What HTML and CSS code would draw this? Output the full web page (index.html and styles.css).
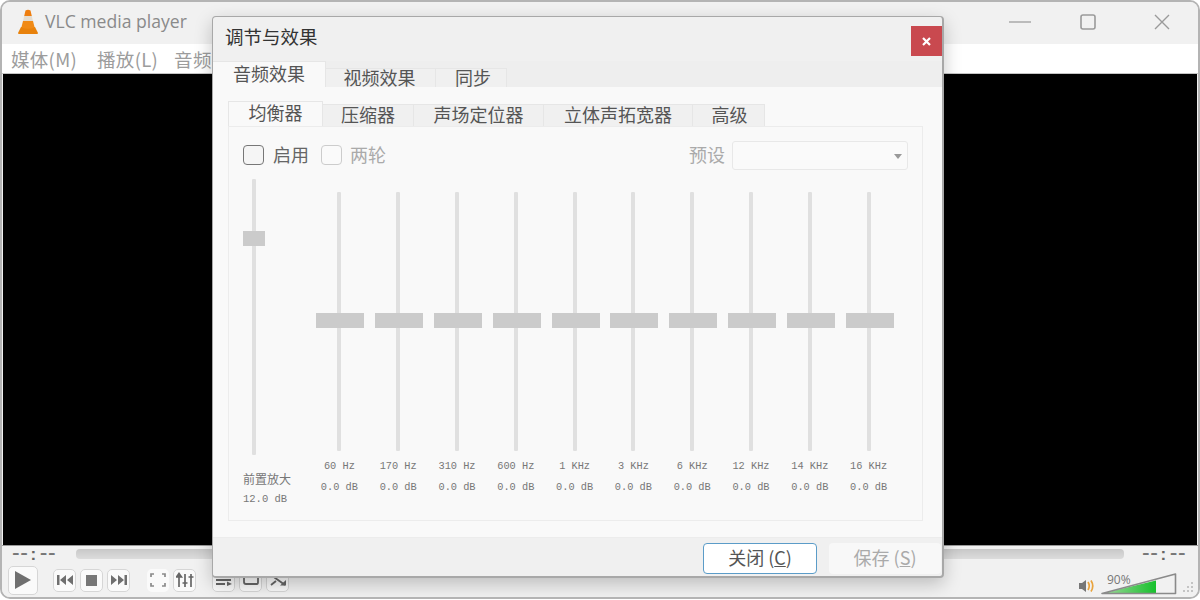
FILE: index.html
```html
<!DOCTYPE html>
<html lang="zh-CN">
<head>
  <meta charset="UTF-8">
  <link rel="stylesheet" href="styles.css">
  <title>VLC media player</title>
</head>
<body>

<div class="player">
  <div class="titlebar">
    <svg class="cone" width="24" height="26" viewBox="0 0 24 26">
      <path d="M2 24 L5 18 H19 L22 24 Q22 25 21 25 H3 Q2 25 2 24Z" fill="#e8820c"/>
      <path d="M9.5 1.5 Q12 0 14.5 1.5 L15.8 7 H8.2Z" fill="#ee7d0e"/>
      <path d="M8.2 7 H15.8 L17 12 H7Z" fill="#e4dccf"/>
      <path d="M7 12 H17 L18.6 18.5 Q12 21 5.4 18.5Z" fill="#f08a16"/>
    </svg>
    <span class="app-name">VLC media player</span>
    <div class="win-buttons">
      <svg width="24" height="16" viewBox="0 0 24 16"><path d="M1 8 H23" stroke="#a8a8a8" stroke-width="1.5"/></svg>
      <svg width="16" height="16" viewBox="0 0 16 16"><rect x="1" y="1" width="14" height="14" rx="2" fill="none" stroke="#9a9a9a" stroke-width="1.6"/></svg>
      <svg width="16" height="16" viewBox="0 0 16 16"><path d="M1 1 L15 15 M15 1 L1 15" stroke="#9a9a9a" stroke-width="1.4"/></svg>
    </div>
  </div>

  <div class="menubar">
    <span>媒体(M)</span>
    <span>播放(L)</span>
    <span>音频(A)</span>
  </div>

  <div class="video"></div>

  <div class="controls">
    <div class="seek-row">
      <span class="time">--<span class="colon">:</span>--</span>
      <div class="seek"></div>
      <span class="time">--<span class="colon">:</span>--</span>
    </div>
    <div class="button-row">
      <button class="ctl ctl-play"><svg width="16" height="18" viewBox="0 0 16 18"><path d="M0 0 L16 9 L0 18Z" fill="#6f6f6f"/></svg></button>
      <button class="ctl"><svg width="16" height="10" viewBox="0 0 16 10"><path d="M0 0 H2.5 V10 H0Z M9 0 V10 L3 5Z M16 0 V10 L10 5Z" fill="#6f6f6f"/></svg></button>
      <button class="ctl"><svg width="11" height="11" viewBox="0 0 11 11"><rect width="11" height="11" fill="#777"/></svg></button>
      <button class="ctl"><svg width="16" height="10" viewBox="0 0 16 10"><path d="M0 0 L6 5 L0 10Z M7 0 L13 5 L7 10Z M13.5 0 H16 V10 H13.5Z" fill="#6f6f6f"/></svg></button>
      <button class="ctl flat"><svg width="16" height="14" viewBox="0 0 16 14"><path d="M1 4 V1 H4 M12 1 H15 V4 M15 10 V13 H12 M4 13 H1 V10" fill="none" stroke="#8a8a8a" stroke-width="1.7"/></svg></button>
      <button class="ctl"><svg width="18" height="16" viewBox="0 0 18 16"><path d="M3 2 V15 M9 2 V15 M15 2 V15" stroke="#666" stroke-width="1.7"/><path d="M0.5 5 L3 1.5 L5.5 5Z M6.5 11 H11.5 M12.5 5 H17.5" stroke="#666" stroke-width="1.6" fill="#666"/></svg></button>
      <button class="ctl group"><svg width="16" height="12" viewBox="0 0 16 12"><path d="M0 1.5 H15 M0 6 H15 M0 10 H9" stroke="#666" stroke-width="1.8"/><path d="M11 7.5 L16 10 L11 12Z" fill="#666"/></svg></button>
      <button class="ctl"><svg width="16" height="12" viewBox="0 0 16 12"><path d="M1 2 V8 Q1 10 3 10 H14 Q15 10 15 8 V2" fill="none" stroke="#666" stroke-width="1.8"/></svg></button>
      <button class="ctl"><svg width="16" height="12" viewBox="0 0 16 12"><path d="M1 1 L15 11 M1 11 L6 7" stroke="#666" stroke-width="1.9"/><path d="M10 11.5 H16 V6Z" fill="#666"/></svg></button>

      <div class="volume">
        <svg class="speaker" width="17" height="14" viewBox="0 0 17 14">
          <path d="M0 4 H3 L7 1 V13 L3 10 H0Z" fill="#777"/>
          <path d="M9 3 Q11.5 7 9 11 M12 1.5 Q15.5 7 12 12.5" fill="none" stroke="#e9a33c" stroke-width="1.7"/>
        </svg>
        <div class="volume-meter">
          <svg width="76" height="22" viewBox="0 0 76 22">
            <defs>
              <linearGradient id="vol" x1="0" x2="1" y1="0" y2="0">
                <stop offset="0" stop-color="#a6d8a0"/>
                <stop offset="1" stop-color="#16c02c"/>
              </linearGradient>
            </defs>
            <path d="M1 20.5 L55 7.5 V20.5Z" fill="url(#vol)"/>
            <path d="M1 20.5 L74.5 1 V20.5Z" fill="none" stroke="#8a8a8a" stroke-width="1.6" stroke-linejoin="round"/>
          </svg>
          <span class="volume-label">90%</span>
        </div>
        <svg class="grip" width="12" height="12" viewBox="0 0 12 12" fill="#c4c4c4">
          <rect x="8" y="0" width="2" height="2"/><rect x="4" y="4" width="2" height="2"/><rect x="8" y="4" width="2" height="2"/>
          <rect x="0" y="8" width="2" height="2"/><rect x="4" y="8" width="2" height="2"/><rect x="8" y="8" width="2" height="2"/>
        </svg>
      </div>
    </div>
  </div>

  <div class="dialog">
    <div class="dialog-head">
      <span class="dialog-title">调节与效果</span>
      <button class="dialog-close"><svg width="9" height="9" viewBox="0 0 9 9"><path d="M1 1 L8 8 M8 1 L1 8" stroke="#fff" stroke-width="2.2"/></svg></button>
    </div>

    <div class="tabs outer-tabs">
      <div class="tab active">音频效果</div>
      <div class="tab">视频效果</div>
      <div class="tab">同步</div>
    </div>

    <div class="dialog-body">
      <div class="tabs inner-tabs">
        <div class="tab active">均衡器</div>
        <div class="tab">压缩器</div>
        <div class="tab">声场定位器</div>
        <div class="tab">立体声拓宽器</div>
        <div class="tab">高级</div>
      </div>

      <div class="pane">
        <div class="options">
          <span class="check"></span><span class="check-label">启用</span>
          <span class="check off"></span><span class="check-label off">两轮</span>
          <span class="preset-label">预设</span>
          <div class="combo"><i></i></div>
        </div>

        <div class="eq">
          <div class="preamp">
            <div class="track"><div class="thumb"></div></div>
            <div class="preamp-name">前置放大</div>
            <div class="preamp-value">12.0 dB</div>
          </div>
          <div class="bands" id="bands"></div>
        </div>
      </div>
    </div>

    <div class="dialog-foot">
      <button class="btn primary">关闭 (<u>C</u>)</button>
      <button class="btn off">保存 (<u>S</u>)</button>
    </div>
  </div>
</div>

<script src="bands.js"></script>
</body>
</html>
```

FILE: bands.js
```js
const freqs = ['60 Hz', '170 Hz', '310 Hz', '600 Hz', '1 KHz', '3 KHz', '6 KHz', '12 KHz', '14 KHz', '16 KHz'];
const bands = document.getElementById('bands');

freqs.forEach((freq) => {
  const band = document.createElement('div');
  band.className = 'band';
  band.innerHTML = `<div class="track"><div class="thumb"></div></div>
    <div class="band-label">${freq}</div>
    <div class="band-label">0.0 dB</div>`;
  bands.appendChild(band);
});
```

FILE: styles.css
```css
* {
  box-sizing: border-box;
}

body {
  margin: 0;
  height: 600px;
  overflow: hidden;
  background-color: #fff;
  font-family: "Noto Sans CJK SC", "Noto Sans", sans-serif;
  color: #555;
}

button {
  font-family: inherit;
  padding: 0;
}

.player {
  position: relative;
  height: 599px;
  display: flex;
  flex-direction: column;
  border: 2px solid #b4b4b4;
  border-radius: 10px;
  overflow: hidden;
  background-color: #f1f1f1;
}

.titlebar {
  height: 42px;
  flex: none;
  display: flex;
  align-items: center;
  padding-left: 14px;
  background-color: #f1f1f1;
}

.cone {
  margin-top: -3px;
}

.app-name {
  margin: -4px 0 0 5px;
  font-family: "Open Sans", sans-serif;
  font-size: 17.6px;
  color: #8a8a8a;
}

.win-buttons {
  margin-left: auto;
  display: flex;
  align-items: center;
  gap: 49px;
  padding-right: 28px;
  margin-top: -3px;
}

.win-buttons svg:nth-child(2) {
  margin-left: -1px;
}

.win-buttons svg:nth-child(3) {
  margin-left: 9px;
}

.menubar {
  height: 30px;
  flex: none;
  display: flex;
  align-items: center;
  gap: 16px;
  padding-left: 9px;
  background-color: #fff;
  border-bottom: 1px solid #c4c4c4;
  font-size: 18.5px;
  letter-spacing: 0.3px;
  color: #9c9c9c;
}

.menubar span:first-child {
  margin-right: 4px;
}

.video {
  flex: 1;
  margin-left: 1px;
  margin-right: 1px;
  background-color: #000;
}

.controls {
  height: 52px;
  flex: none;
  border-top: 1px solid #999;
  background-color: #f1f1f1;
}

.seek-row {
  display: flex;
  align-items: center;
  height: 15px;
  padding: 0 9px 0 10px;
}

.time {
  width: 47px;
  font-family: "Liberation Sans", sans-serif;
  font-size: 23px;
  line-height: 15px;
  color: #777;
  letter-spacing: 0.6px;
  white-space: nowrap;
}

.colon {
  margin: 0 3px 0 2px;
  font-size: 17px;
  font-weight: bold;
  color: #666;
}

.seek {
  flex: 1;
  height: 10px;
  margin: 0 18px 0 17px;
  border-radius: 4px;
  background: linear-gradient(#c8c8c8, #dcdcdc);
}

.button-row {
  display: flex;
  align-items: center;
  gap: 4px;
  height: 36px;
  padding: 2px 0 0 6px;
}

.ctl {
  width: 23px;
  height: 23px;
  display: flex;
  align-items: center;
  justify-content: center;
  background-color: #fafafa;
  border: 1px solid #d6d6d6;
  border-radius: 5px;
}

.ctl-play {
  width: 30px;
  height: 29px;
  margin-right: 11px;
}

.ctl.flat {
  width: 22px;
  margin-left: 13px;
  border-color: transparent;
}

.ctl.group {
  margin-left: 12px;
}

.volume {
  margin: 4px 0 0 auto;
  display: flex;
  align-items: flex-end;
  padding-right: 3px;
  height: 26px;
}

.speaker {
  margin-bottom: 2px;
}

.volume-meter {
  position: relative;
  width: 76px;
  height: 22px;
  margin-left: 5px;
}

.volume-meter svg {
  display: block;
}

.volume-label {
  position: absolute;
  left: 6px;
  top: 0;
  font-family: "Open Sans", sans-serif;
  font-size: 12px;
  line-height: 14px;
  color: #777;
}

.grip {
  margin-left: 6px;
  margin-bottom: 1px;
}

/* dialog floats on top of the player */
.dialog {
  position: absolute;
  left: 210px;
  top: 14px;
  width: 732px;
  height: 562px;
  display: flex;
  flex-direction: column;
  background-color: #f0f0f0;
  border: 1px solid #a8a8a8;
  border-bottom-width: 2px;
  border-right-width: 2px;
  border-radius: 4px;
  box-shadow: 0 6px 18px rgba(0, 0, 0, 0.22);
}

.dialog-head {
  height: 44px;
  flex: none;
  display: flex;
  align-items: center;
  padding: 0 0 0 12px;
}

.dialog-title {
  font-size: 18.5px;
  color: #333;
  margin-top: -7px;
}

.dialog-close {
  width: 31px;
  height: 30px;
  margin-left: auto;
  margin-top: 4px;
  display: flex;
  align-items: center;
  justify-content: center;
  background-color: #c9494f;
  border: none;
}

.tabs {
  display: flex;
  align-items: flex-end;
  flex: none;
}

.tab {
  display: flex;
  align-items: center;
  justify-content: center;
  padding-bottom: 4px;
  background-color: #f0f0f0;
  border: 1px solid #e6e6e6;
  border-bottom: none;
  border-left: none;
  color: #555;
  font-size: 18px;
  line-height: 24px;
}

.tab.active {
  background-color: #f9f9f9;
  color: #555;
}

.outer-tabs {
  height: 26px;
  background-color: #eeeeee;
}

.outer-tabs .tab {
  height: 19px;
  padding-bottom: 2px;
}

.outer-tabs .tab.active {
  width: 113px;
  height: 26px;
  padding-bottom: 4px;
}

.outer-tabs .tab:nth-child(2) {
  width: 110px;
  padding-right: 2px;
}

.outer-tabs .tab:nth-child(3) {
  width: 71px;
  padding-left: 4px;
}

.dialog-body {
  flex: 1;
  padding: 14px 19px 16px 15px;
  display: flex;
  flex-direction: column;
  background-color: #f9f9f9;
}

.inner-tabs {
  height: 25px;
}

.inner-tabs .tab {
  height: 22px;
  padding-bottom: 3px;
}

.inner-tabs .tab.active {
  height: 25px;
  width: 95px;
  padding-bottom: 5px;
  border-left: 1px solid #e6e6e6;
}

.inner-tabs .tab:nth-child(2) {
  width: 91px;
}

.inner-tabs .tab:nth-child(3) {
  width: 130px;
}

.inner-tabs .tab:nth-child(4) {
  width: 149px;
}

.inner-tabs .tab:nth-child(5) {
  width: 72px;
  padding-left: 2px;
}

.pane {
  flex: 1;
  padding: 14px 14px 0 14px;
  border: 1px solid #ececec;
}

.options {
  display: flex;
  align-items: center;
  height: 29px;
  font-size: 18px;
}

.options span {
  position: relative;
  top: -2px;
}

.check {
  width: 21px;
  height: 20px;
  background-color: #f5f5f5;
  border: 1.5px solid #777;
  border-radius: 4px;
}

.options .check {
  top: -1px;
}

.check.off {
  margin-left: 12px;
  border: 1px solid #ccc;
  background-color: #fafafa;
}

.check-label {
  margin-left: 9px;
  color: #666;
}

.check-label.off {
  margin-left: 8px;
  color: #aaa;
}

.preset-label {
  margin-left: auto;
  color: #aaa;
}

.combo {
  position: relative;
  width: 176px;
  height: 29px;
  margin-left: 7px;
  background-color: #fafafa;
  border: 1px solid #e8e8e8;
  border-radius: 3px;
}

.combo i {
  position: absolute;
  right: 5px;
  top: 12px;
  border-left: 4px solid transparent;
  border-right: 4px solid transparent;
  border-top: 5px solid #999;
}

.eq {
  display: flex;
  margin-top: 9px;
}

.preamp {
  width: 67px;
}

.preamp .track {
  height: 276px;
  margin-left: 9px;
}

.preamp .thumb {
  left: -9px;
  top: 52px;
  width: 22px;
  height: 15px;
}

.preamp-name {
  margin-top: 15px;
  font-size: 12px;
  line-height: 18px;
  color: #777;
}

.preamp-value {
  margin-top: 2px;
  font-family: "Liberation Mono", monospace;
  font-size: 10.5px;
  line-height: 18px;
  color: #777;
}

.bands {
  display: grid;
  grid-template-columns: repeat(10, 58.8px);
}

.band {
  display: flex;
  flex-direction: column;
  align-items: center;
}

.band .track {
  height: 259px;
  margin-top: 13px;
  margin-bottom: 5px;
}

.band .thumb {
  left: -21px;
  top: 121px;
  width: 48px;
  height: 15px;
}

.track {
  position: relative;
  width: 4px;
  background-color: #e0e0e0;
  border-radius: 1px;
}

.thumb {
  position: absolute;
  background-color: #cbcbcb;
}

.band-label {
  font-family: "Liberation Mono", monospace;
  font-size: 10.3px;
  line-height: 20.5px;
  color: #777;
  white-space: nowrap;
}

.dialog-foot {
  height: 39px;
  flex: none;
  display: flex;
  gap: 12px;
  padding: 5px 1px 0 490px;
  border-top: 1px solid #ececec;
}

.btn {
  width: 114px;
  height: 31px;
  padding-bottom: 3px;
  font-size: 18px;
  line-height: 24px;
  border-radius: 4px;
  color: #555;
}

.btn.primary {
  background-color: #fff;
  border: 1.5px solid #5b9cc8;
}

.btn.off {
  width: 112px;
  background-color: #f8f8f8;
  border: none;
  color: #aaa;
}
```
